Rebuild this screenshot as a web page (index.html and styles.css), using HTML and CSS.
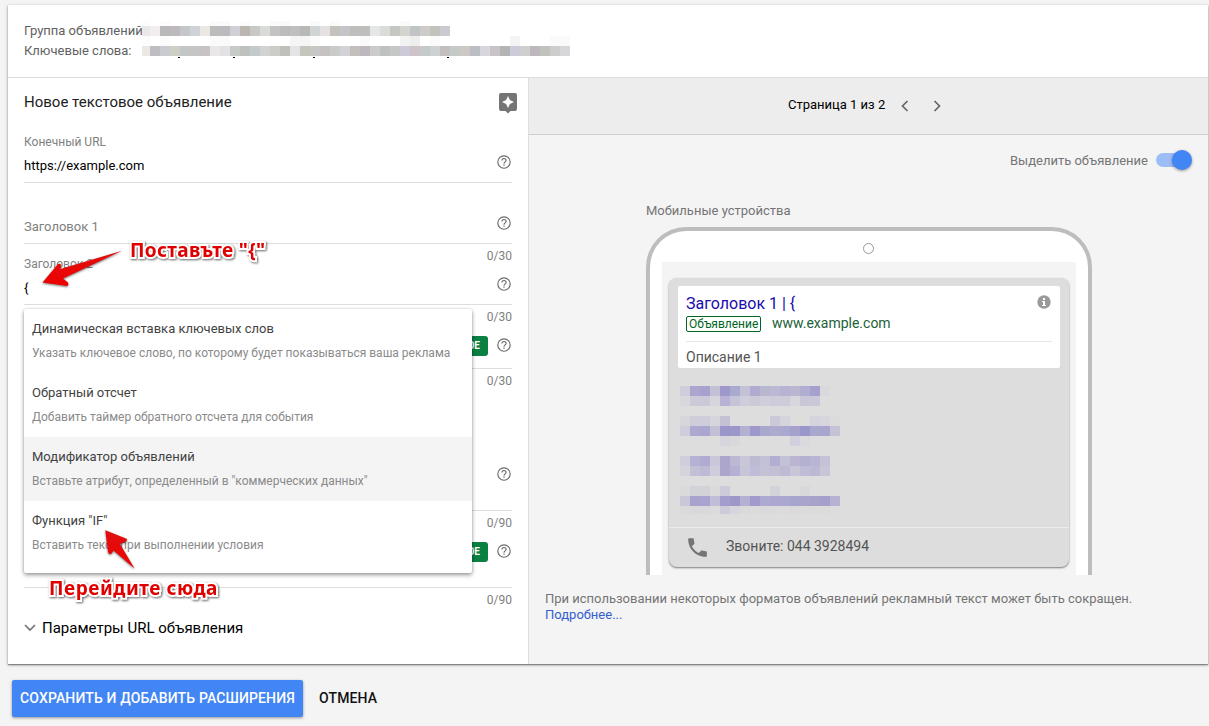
FILE: index.html
```html
<!DOCTYPE html>
<html lang="ru">
<head>
<meta charset="utf-8">
<title>Новое текстовое объявление</title>
<link rel="stylesheet" href="styles.css">
</head>
<body>
<svg class="defs" width="0" height="0">
  <symbol id="help" viewBox="0 0 16 16"><circle cx="8" cy="8" r="6.200" fill="none" stroke="#6c6c6c" stroke-width="1.150"/><path fill="none" stroke="#6c6c6c" stroke-width="1.100" d="M5.900 6.600C5.900 3.900 10.100 3.900 10.100 6.500C10.100 7.900 8 8 8 9.700"/><path fill="#6c6c6c" d="M7.400 10.600h1.200v1.200H7.400z"/></symbol>
</svg>
<main class="card">
  <header class="summary">
    <div class="summary-row"><span>Группа объявлений</span></div>
    <div class="summary-row"><span>Ключевые слова:</span></div>
    <svg class="mosaic-top" id="mosaic-top" width="430" height="38"></svg>
  </header>
  <div class="columns">
    <section class="form">
      <div class="form-head">
        <h1>Новое текстовое объявление</h1>
        <svg class="idea" width="20" height="22" viewBox="0 0 20 22"><path fill="#757575" d="M3 1h14Q19 1 19 3v14Q19 19 17 19H12.500L10 21.500 7.500 19H3Q1 19 1 17V3Q1 1 3 1z"/><path fill="#fff" d="M10 4 11.900 8.100 16 10 11.900 11.900 10 16 8.100 11.900 4 10 8.100 8.100z"/></svg>
      </div>
      <div class="field f1">
        <div class="entry"><label>Конечный URL</label><span class="value">https://example.com</span></div>
        <div class="side"><div class="tools"><svg class="help"><use href="#help"/></svg></div></div>
      </div>
      <div class="field f2">
        <div class="entry"><label>Заголовок 1</label></div>
        <div class="side"><div class="tools"><svg class="help"><use href="#help"/></svg></div></div>
      </div>
      <div class="field f3">
        <div class="entry"><label>Заголовок 2</label><span class="value">{</span></div>
        <div class="side"><span class="count">0/30</span><div class="tools"><svg class="help"><use href="#help"/></svg></div></div>
      </div>
      <div class="field f4">
        <div class="side"><span class="count">0/30</span><div class="tools"><span class="badge">НОВОЕ</span><svg class="help"><use href="#help"/></svg></div></div>
      </div>
      <div class="field f5">
        <div class="side"><span class="count">0/30</span><div class="tools"><svg class="help"><use href="#help"/></svg></div></div>
      </div>
      <div class="field f6">
        <div class="side"><span class="count">0/90</span><div class="tools"><span class="badge">НОВОЕ</span><svg class="help"><use href="#help"/></svg></div></div>
      </div>
      <div class="params">
        <div class="params-link"><svg width="12" height="8" viewBox="0 0 12 8"><path d="M1 1l5 5 5-5" fill="none" stroke="#757575" stroke-width="1.700"/></svg><span>Параметры URL объявления</span></div>
        <span class="count">0/90</span>
      </div>
    </section>
    <section class="preview">
      <div class="pager">
        <span class="page-no">Страница 1 из 2</span>
        <svg width="8" height="12" viewBox="0 0 8 12"><path d="M6.500 1l-5 5 5 5"/></svg>
        <svg width="8" height="12" viewBox="0 0 8 12"><path d="M1.500 1l5 5-5 5"/></svg>
      </div>
      <div class="highlight"><span>Выделить объявление</span><div class="track"><div class="knob"></div></div></div>
      <div class="device-label"><span>Мобильные устройства</span></div>
      <div class="device">
        <div class="camera"></div>
        <div class="screen">
          <div class="result">
            <div class="ad">
              <div class="ad-title"><span>Заголовок 1 | {</span><svg width="14" height="14" viewBox="0 0 14 14"><circle cx="7" cy="7" r="6.700" fill="#9a9a9a"/><path fill="#fff" d="M6 3h2v2H6zM5 6h3v4h1v1H5v-1h1V7H5z"/></svg></div>
              <div class="ad-url"><span class="ad-tag"><b>Объявление</b></span><span class="ad-host">www.example.com</span></div>
              <div class="ad-text"><span>Описание 1</span></div>
            </div>
            <svg class="mosaic-links" id="mosaic-links" width="160" height="129"></svg>
            <div class="call"><svg width="25" height="25" viewBox="0 0 24 24"><path fill="#757575" d="M6.620 10.790c1.440 2.830 3.760 5.140 6.590 6.590l2.200-2.200c.27-.27.67-.36 1.020-.24 1.120.37 2.330.57 3.570.57.55 0 1 .45 1 1V20c0 .55-.45 1-1 1-9.390 0-17-7.610-17-17 0-.55.45-1 1-1h3.500c.55 0 1 .45 1 1 0 1.250.2 2.450.57 3.570.11.35.03.74-.25 1.020l-2.200 2.200z"/></svg><span class="phone">Звоните: 044 3928494</span></div>
          </div>
        </div>
      </div>
      <p class="note"><span>При использовании некоторых форматов объявлений рекламный текст может быть сокращен.</span><br><a>Подробнее...</a></p>
    </section>
  </div>
</main>
<footer class="actions"><button class="save"><span>СОХРАНИТЬ И ДОБАВИТЬ РАСШИРЕНИЯ</span></button><button class="cancel"><span>ОТМЕНА</span></button></footer>

<div class="menu">
  <div class="item"><span class="name">Динамическая вставка ключевых слов</span><span class="desc">Указать ключевое слово, по которому будет показываться ваша реклама</span></div>
  <div class="item"><span class="name">Обратный отсчет</span><span class="desc">Добавить таймер обратного отсчета для события</span></div>
  <div class="item active"><span class="name">Модификатор объявлений</span><span class="desc">Вставьте атрибут, определенный в "коммерческих данных"</span></div>
  <div class="item"><span class="name">Функция "IF"</span><span class="desc">Вставить текст при выполнении условия</span></div>
</div>

<div class="tip tip-a">Поставъте "{"</div>
<div class="tip tip-b">Перейдите сюда</div>
<svg class="arrow arrow-a" width="90" height="46" viewBox="38 246 90 46"><path fill="url(#red)" d="M42.500 282.500 58 264Q60 263 61 265L60.500 269 122 250.700 63 278.500 68 282.500Q69 285 67 286z"/><defs><linearGradient id="red" x1="0" y1="0" x2="0" y2="1"><stop offset="0" stop-color="#e01010"/><stop offset="1" stop-color="#ee0000"/></linearGradient></defs></svg>
<svg class="arrow arrow-b" width="40" height="48" viewBox="100 526 40 48"><path fill="url(#red)" d="M105.300 530.300 126 538.500Q128 540 126 541.500L120 544 134.500 568.500 113.500 550.500 111.500 553.500Q109 555 108 552z"/></svg>
<script src="mosaic.js"></script>
</body>
</html>
```
FILE: styles.css
```css
* { box-sizing: border-box; }
body { margin: 0; padding: 5px 0 0 8px; height: 726px; position: relative; overflow: hidden; background: #f4f4f4; font: 13px/16px Roboto, "Open Sans", sans-serif; color: #212121; }
.defs { position: absolute; }
.card { width: 1200px; height: 659px; background: #fff; box-shadow: 0 1px 3px rgba(0,0,0,.35), 0 1px 1px rgba(0,0,0,.3); }
.summary { position: relative; height: 73px; padding: 16px 16px 0; border-bottom: 1px solid #dedede; color: #616161; }
.summary-row { height: 20px; line-height: 20px; }
.mosaic-top { position: absolute; left: 134px; top: 16px; }
.columns { display: flex; height: 586px; }
.form { width: 521px; padding: 0 16px; border-right: 1px solid #dedede; }
.form-head { height: 48px; display: flex; justify-content: space-between; align-items: center; margin-right: -6px; }
.idea { margin-top: 2px; }
h1 { margin: 0; font-size: 15px; font-weight: 400; color: #212121; }
.field { display: flex; justify-content: space-between; border-bottom: 1px solid #dedede; color: #757575; }
.entry { display: flex; flex-direction: column; align-items: flex-start; }
label { color: #808080; }
.value { color: #000; margin-top: 8px; }
.side { margin-left: auto; display: flex; flex-direction: column; align-items: flex-end; padding-top: 4px; }
.tools { display: flex; align-items: center; gap: 8px; margin-top: auto; margin-bottom: 12px; height: 16px; }
.help { flex: none; width: 16px; height: 16px; }
.count { color: #808080; font-size: 12px; }
.badge { height: 20px; line-height: 20px; padding: 0 8px; border-radius: 3px; background: #0b8043; color: #fff; font-size: 10px; font-weight: 700; margin-top: 1px; }
.f1 { height: 57px; padding-top: 8px; }
.f1 label { font-size: 12px; }
.f2 { height: 61px; }
.f2 .entry { padding-top: 36px; }
.f3 { height: 61px; }
.f3 .entry { padding-top: 12px; }
.f3 label { font-size: 12px; }
.f4 { height: 64px; }
.f4 .tools { margin-bottom: 15px; }
.f5 { height: 142px; }
.f6 { height: 77px; }
.f5 .tools, .f6 .tools { margin-bottom: 28px; }
.params { display: flex; justify-content: space-between; padding-top: 4px; }
.params-link { display: flex; align-items: center; gap: 6px; height: 16px; margin-top: 28px; font-size: 15px; color: #000; }

.preview { flex: 1; background: #f4f4f4; }
.pager { height: 57px; padding-left: 259px; background: #ededed; border-bottom: 1px solid #cecece; display: flex; align-items: center; gap: 24px; color: #000; }
.pager svg { fill: none; stroke: #666; stroke-width: 1.700; }
.page-no { margin-right: -8px; width: 97px; white-space: nowrap; padding-bottom: 2px; }
.highlight { height: 52px; display: flex; justify-content: flex-end; align-items: center; gap: 8px; padding-right: 20px; color: #757575; }
.track { width: 32px; height: 14px; margin-bottom: 2px; border-radius: 7px; background: #9cbdf5; display: flex; align-items: center; justify-content: flex-end; }
.knob { flex: none; width: 20px; height: 20px; margin-right: -4px; border-radius: 50%; background: #4285f4; box-shadow: 0 1px 3px rgba(0,0,0,.4); }
.device-label { padding: 16px 0 8px 117px; color: #757575; }
.device { margin-left: 117px; width: 446px; height: 348px; border: 4px solid #bdbdbd; border-bottom: 0; border-radius: 40px 40px 0 0; background: #fff; padding: 12px 12px 0; }
.camera { width: 11px; height: 11px; margin: 0 0 0 201px; border: 1px solid #999; border-radius: 50%; }
.screen { height: 313px; margin-top: 8px; padding: 16px 7px 0; background: #f4f4f4; }
.result { height: 289px; border-radius: 8px; background: #ddd; box-shadow: 0 1px 2px rgba(0,0,0,.5); padding: 8px 0 0; display: flex; flex-direction: column; }
.ad { flex: none; height: 82px; margin: 0 9px; padding: 8px 8px 0; border-radius: 2px; background: #fff; }
.ad-title { display: flex; justify-content: space-between; height: 20px; line-height: 20px; font-size: 16px; color: #1a0dab; }
.ad-title svg { margin: 1px 1px 0 0; }
.ad-url { height: 28px; padding-top: 1px; display: flex; align-items: flex-start; gap: 11px; border-bottom: 1px solid #e6e6e6; color: #006621; }
.ad-tag { width: 75px; height: 16px; margin-top: 1px; border: 1px solid #006621; border-radius: 2px; line-height: 14px; padding-left: 2px; font-size: 12px; }
.ad-tag b { font-weight: 400; white-space: nowrap; }
.ad-host { font-size: 14px; line-height: 17px; color: #1c5f38; }
.ad-text { padding-top: 7px; font-size: 14px; color: #545454; }
.mosaic-links { flex: none; margin: 18px 0 0 11px; }
.call { margin-top: auto; height: 40px; border-top: 1px solid #ececec; display: flex; align-items: center; gap: 16px; padding-left: 16px; font-size: 14px; color: #545454; }
.phone { padding-bottom: 3px; }
.note { margin: 16px 0 0 16px; color: #757575; white-space: nowrap; }
.note a { color: #3360d0; }

.actions { display: flex; gap: 16px; padding: 16px 0 0 4px; }
.actions button { height: 37px; border: 0; padding: 0; font: 500 14px/37px Roboto, sans-serif; letter-spacing: .14px; background: none; color: #111; white-space: nowrap; text-align: left; }
.actions .save { width: 291px; padding-left: 8px; background: #4285f4; color: #fff; border-radius: 2px; box-shadow: 0 1px 3px rgba(0,0,0,.4); }

.menu { position: absolute; left: 24px; top: 309px; width: 448px; height: 264px; background: #fff; border-radius: 2px; box-shadow: 0 2px 4px rgba(0,0,0,.4), 0 0 2px rgba(0,0,0,.15); }
.item { height: 64px; padding: 12px 8px 0; display: flex; flex-direction: column; align-items: flex-start; gap: 8px; white-space: nowrap; }
.active { background: #f4f4f4; }
.name { color: #424242; }
.desc { font-size: 12px; color: #8a8a8a; }

.tip { position: absolute; font: 700 19px/24px "Noto Sans", "Open Sans", sans-serif; color: #e00000; white-space: nowrap; -webkit-text-stroke: 4px #fff; paint-order: stroke fill; filter: drop-shadow(1px 1.500px 1px rgba(0,0,0,.6)); }
.tip-a { left: 130px; top: 238px; letter-spacing: .35px; }
.tip-b { left: 49px; top: 576px; letter-spacing: .55px; }
.arrow { position: absolute; filter: drop-shadow(0 1px 1px rgba(0,0,0,.55)); }
.arrow-a { left: 38px; top: 246px; }
.arrow-b { left: 100px; top: 526px; }
```
FILE: mosaic.js
```js
// Draws blocks that hide private text: each row has a top offset, a height and cell colours ('.' is empty).
function drawMosaic(id, rows, firstWidth) {
  const svg = document.getElementById(id);
  rows.forEach(([y, h, cells]) => {
    cells.split(' ').forEach((c, i) => {
      if (c === '.') return;
      const r = document.createElementNS('http://www.w3.org/2000/svg', 'rect');
      r.setAttribute('x', i === 0 ? 0 : firstWidth + (i - 1) * 10);
      r.setAttribute('width', i === 0 ? firstWidth : 10);
      r.setAttribute('y', y);
      r.setAttribute('height', h);
      r.setAttribute('fill', '#' + c);
      svg.appendChild(r);
    });
  });
}
drawMosaic('mosaic-top', [
  [0, 5, 'fcfcfc . fbfbfb . . . . fafafa fafafa . fbfbfb . . fafafa fafafa . . fafafa . fafafa . . . . . . fafafa . . . .'],
  [5, 10, 'e8e8e8 f2eeee b8b8ba bdb8bc c3c7ca cfd2d7 ebe8e3 bcbcbd bbbabd cfcfd6 bab5ae c8c9c4 d8dbd7 c1c4c3 bcbcbc bfbfc0 b8b9b6 d0d4d5 e5e1e3 c5c2bd c5c4c9 bebfbd bebfbd e5e7e6 daddd7 c5c7c3 d2d4cd c1c4c6 cfcbc8 c1c4bd cacacf'],
  [15, 10, 'fcfcfc . fbfbfb . . . . fafafa fafafa . . . . . . f5f5f5 f5f5f5 fbfbfb . . . . fafafa . . . f2f2f3 eeeeee . fafafa . . . . . . . f4f4f4 . . . fafafa fafafa'],
  [25, 10, 'ece8e3 bebec2 cacad1 cdcec5 c2c6c4 c5c5c7 c9c2c5 e8e8e9 e3e1e3 c7cbc7 bfc1bf c4caca d0d3d1 cdcdc7 bec0bc e4e4e4 c4c6bc c7c7c6 c5c2bf c8cbc7 d3d3d7 c3bfbd beb7be cacccb bfc1c0 c3c8c6 cccad8 cdc3c9 c4caca cdd1d1 c3bfbe c4cbc6 cec8c4 bdbdc4 d6d6dc c7c3c7 b4b4b4 cdcbda cfcfcf beb8bd c0c3bb cdcdcd d7d7d9'],
], 8);
// Descenders left below the covered keywords
[[36, 36], [91, 36], [171, 36], [305, 36]].forEach(([x, y]) => {
  const r = document.createElementNS('http://www.w3.org/2000/svg', 'rect');
  r.setAttribute('x', x); r.setAttribute('y', y);
  r.setAttribute('width', 2); r.setAttribute('height', 1);
  document.getElementById('mosaic-top').appendChild(r);
});
drawMosaic('mosaic-links', [
  [0, 10, 'cfcddc aca6cf a7a2cd c3c1d6 9f99cb aaaacf c3c1d5 b1abd0 b8b7d0 bcb9d4 b8b3d2 bbb5d1 b1add1 a5a1cf d9d9db'],
  [10, 10, 'd9d7dc ccc9d9 cbc8d8 d6d4dc b8b3d4 c5c3d6 cfcdda cbc9d8 d0ceda cecbda cecbda d7d6dc c9c6d8 cac7d8'],
  [30, 10, 'd6d6db cfcdd9 cecdd9 d6d5dc c4c1d4 . . . . cbc9d8 d5d4dc . . d4d4dc d7d6dc dbdbdc'],
  [40, 10, 'cfccdb ada8cf a9a7d0 c3c0d6 9b96c9 9b97c9 b4b0d2 9d97ca a8a8ce aeaace a9a8d0 a5a1cb 9b96c9 a8a7ce a8a5cf c5c2d8'],
  [50, 10, '. . . . d6d5dc d9d9dc . . . . . d2d0dc dadade'],
  [70, 10, 'd0cedd b5b1d2 b0abd2 c9c7d9 aca6cc bbb8d4 c8c6d7 bdbad4 c3c1d7 b2aed2 c2c1d6 bbb5d1 b4b1d0 b9b4d3 c5c2d8'],
  [80, 10, 'd6d4db c2c0d7 bebad4 cfcddc aca6cc b5b1d5 c6c4d7 bfbcd7 c5c2d6 c3c0d6 bdbbd3 c7c5d7 bfbcd7 bcbad3 c7c5d7'],
  [100, 10, 'dadada d2d3d8 d3d2d9 dadadb cdcadb . . . . d1d3d8 . . d8d8da'],
  [110, 10, 'cac7d8 a7a3cc a9a4cf bfbdd7 a39dcd 9d97c8 b4b0d2 a19aca abaad0 aca7d1 aaa8d0 a7a5cd a8a4cc a7a2ca a59fcc b7b1d3'],
  [120, 8, 'dadadc d9d9dc d9d9dc dbdbdd cdcad9 d6d5dd dadadb dbdbdc dadadd dbdbdc dbdbdc dadadc dbdbdc dbdbdc dbdbdc dcdcdd'],
], 10);
```
